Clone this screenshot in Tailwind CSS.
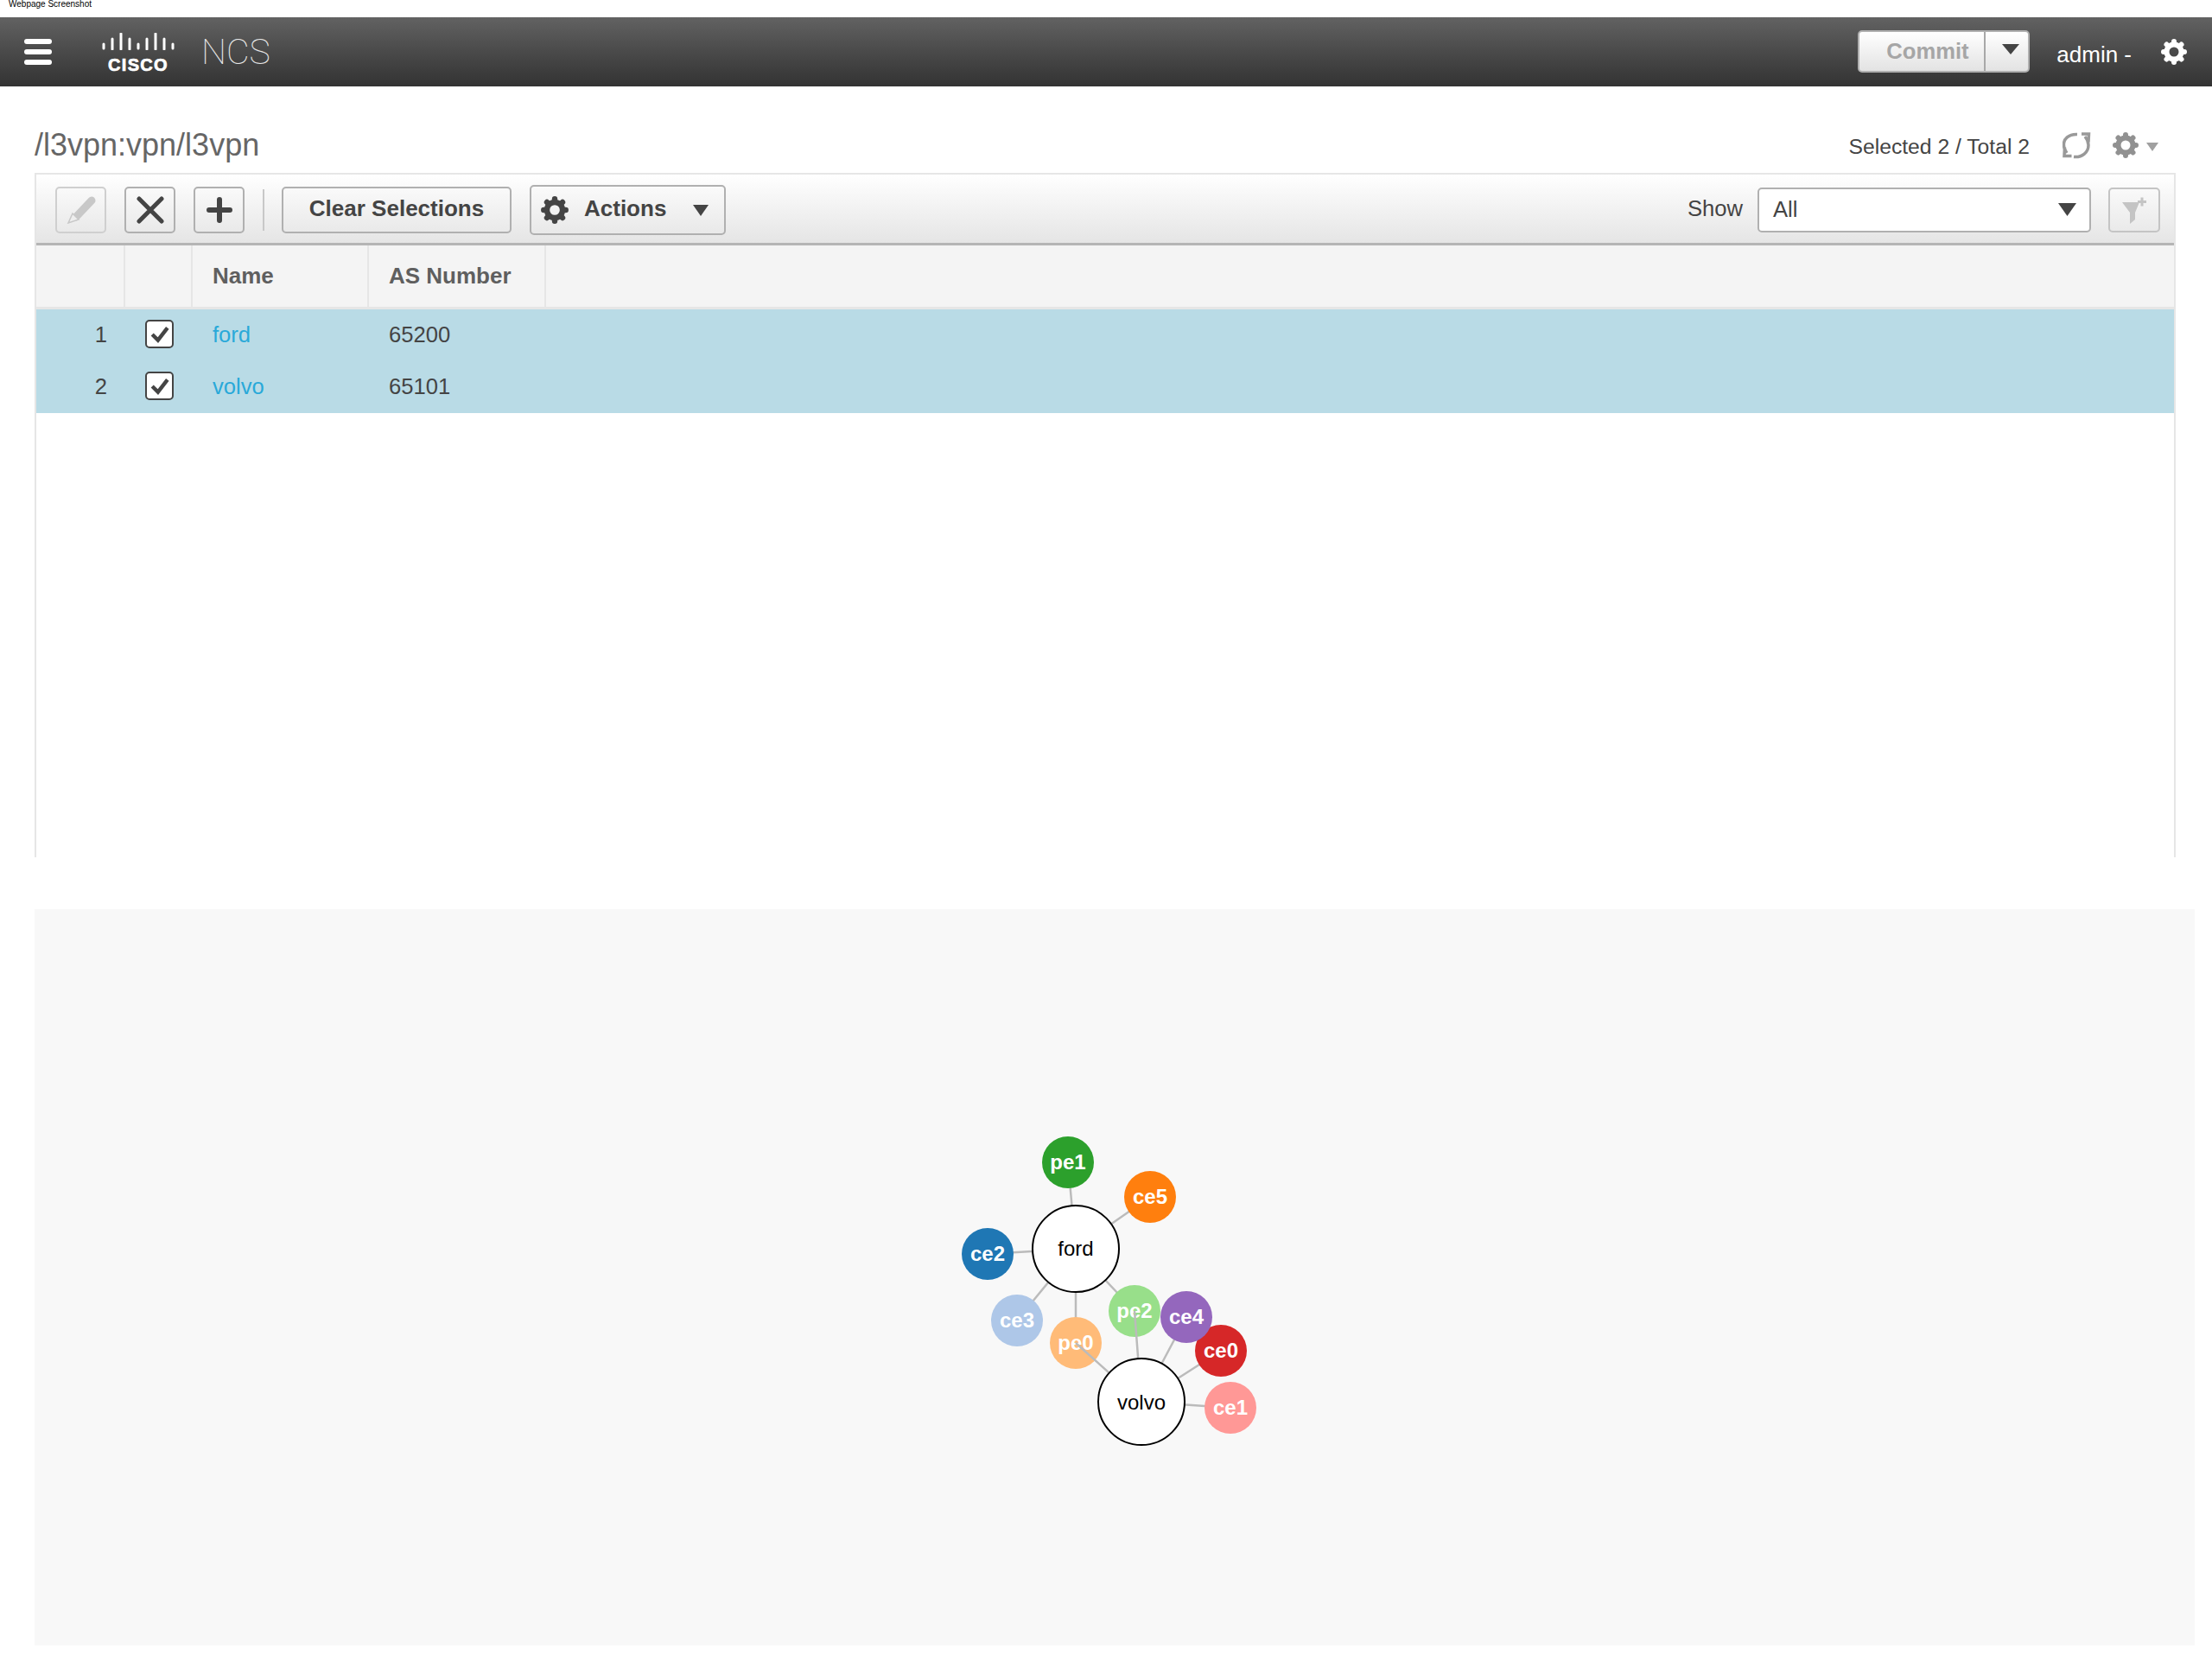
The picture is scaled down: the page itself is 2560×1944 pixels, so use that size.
<!DOCTYPE html>
<html><head><meta charset="utf-8"><title>NCS</title>
<script src="https://cdn.jsdelivr.net/npm/@tailwindcss/browser@4"></script></head>
<body class="bg-white font-['Liberation_Sans',Arial,sans-serif] text-[#444]">
<div class="w-[2560px] h-[1944px] overflow-hidden">
  <div class="h-[20px] pl-[10px] text-[10px] leading-[10px] text-black">Webpage Screenshot</div>
  <header class="h-[80px] flex items-center bg-gradient-to-b from-[#626262] to-[#333333]">
    <div class="ml-[28px] w-[32px] flex flex-col gap-[6px]">
      <div class="h-[6px] rounded-[3px] bg-white"></div><div class="h-[6px] rounded-[3px] bg-white"></div><div class="h-[6px] rounded-[3px] bg-white"></div>
    </div>
    <div class="ml-[58px] w-[84px] flex flex-col items-center mt-[2px]">
      <svg width="84" height="20" viewBox="0 0 84 20" fill="none" stroke="#fff" stroke-width="3" stroke-linecap="round" class="block"><path d="M2 13v5M12 7v12M22 1v18M32 7v12M42 13v5M52 7v12M62 1v18M72 7v12M82 13v5"/></svg>
      <span class="mt-[8px] text-[20px] leading-[18px] font-bold tracking-[1.3px] text-white [-webkit-text-stroke:0.7px_white]">CISCO</span>
    </div>
    <span class="ml-[31px] text-[41px] leading-[42px] font-thin font-['Roboto',sans-serif] text-[#e8e8e8]">NCS</span>
    <div class="ml-auto flex items-center h-[49px] w-[199px] rounded-[5px] border-2 border-[#b0b0b0] bg-gradient-to-b from-white to-[#e3e3e3] -mt-[2px]">
      <span class="w-[144px] pl-[31px] text-[25.6px] font-bold text-[#a6a6a6]">Commit</span>
      <div class="h-full border-l-2 border-[#a8a8a8] flex-1 flex justify-center pt-[14px] pl-[9px]">
        <svg width="20" height="12" viewBox="0 0 20 12"><path d="M0 0h20L10 12z" fill="#444"/></svg>
      </div>
    </div>
    <span class="ml-[31px] text-[26px] leading-[26px] text-white mt-[5px]">admin -</span>
    <svg class="ml-[33px] mr-[28px]" width="32" height="32" viewBox="0 0 32 32" fill="none" stroke="#fff"><circle cx="16" cy="16" r="8.5" stroke-width="6"/><path stroke-width="6" stroke-linecap="round" d="M16 4v3M16 25v3M4 16h3M25 16h3M7.5 7.5l2 2M22.5 22.5l2 2M24.5 7.5l-2 2M9.5 22.5l-2 2"/></svg>
  </header>
  <main class="pl-[40px]">
    <div class="h-[100px] w-[2478px] flex items-start">
      <h1 class="mt-[50px] text-[36px] leading-[36px] text-[#666]">/l3vpn:vpn/l3vpn</h1>
      <span class="ml-auto mt-[58px] text-[24.7px] leading-[24px] text-[#444]">Selected 2 / Total 2</span>
      <svg class="ml-[38px] mt-[53px]" width="33" height="32" viewBox="0 0 33 32" fill="none" stroke="#999" stroke-width="3.500"><path d="M17 2.500C7 2 1 8 1.500 15 1.500 18 3 21 5 24M13 28.500C23 29.500 30 23 30 15 30 11 28.500 8 26 5"/><path d="M2.500 17.500L2 27.500H10.500M22 2H30.500L30 11.500" stroke-width="3.500"/></svg>
      <svg class="ml-[24px] mt-[52px]" width="32" height="32" viewBox="0 0 32 32" fill="none" stroke="#919191"><circle cx="16" cy="16" r="8.5" stroke-width="6"/><path stroke-width="6" stroke-linecap="round" d="M16 4v3M16 25v3M4 16h3M25 16h3M7.5 7.500l2 2M22.500 22.500l2 2M24.500 7.500l-2 2M9.500 22.500l-2 2"/></svg>
      <svg class="ml-[8px] mt-[65px] mr-[20px]" width="14" height="10" viewBox="0 0 14 10"><path d="M0 0h14L7 10z" fill="#a0a0a0"/></svg>
    </div>
    <section class="w-[2478px] h-[792px] border-t-2 border-x-2 border-[#e6e6e6]">
      <div class="h-[82px] border-b-[3px] border-[#b5b5b5] bg-gradient-to-b from-white to-[#e5e5e5] flex items-center pt-[2px] pl-[22px] pr-[16px]">
        <button class="w-[59px] h-[54px] rounded-[5px] border-2 border-[#cfcfcf] flex items-center justify-center">
          <svg width="34" height="32" viewBox="0 0 34 32"><path d="M29 5L11 24" stroke="#c8c8c8" stroke-width="9" stroke-linecap="round"/><path d="M7 20l7 7-12 4z" fill="#eee" stroke="#c8c8c8" stroke-width="1.500"/></svg>
        </button>
        <button class="ml-[21px] w-[59px] h-[54px] rounded-[5px] border-2 border-[#b0b0b0] flex items-center justify-center">
          <svg width="32" height="32" viewBox="0 0 32 32" stroke="#444" stroke-width="5" stroke-linecap="round"><path d="M3 3l26 26M29 3L3 29"/></svg>
        </button>
        <button class="ml-[21px] w-[59px] h-[54px] rounded-[5px] border-2 border-[#b0b0b0] flex items-center justify-center">
          <svg width="30" height="30" viewBox="0 0 30 30" stroke="#444" stroke-width="6" stroke-linecap="round"><path d="M15 3v24M3 15h24"/></svg>
        </button>
        <div class="ml-[21px] w-[2px] h-[48px] bg-[#c8c8c8]"></div>
        <button class="ml-[20px] w-[266px] h-[54px] pb-[2px] rounded-[5px] border-2 border-[#b0b0b0] text-[26px] font-bold text-[#444]">Clear Selections</button>
        <button class="ml-[21px] w-[227px] h-[58px] rounded-[5px] border-2 border-[#b0b0b0] flex items-center text-[26px] font-bold text-[#444]">
          <svg class="ml-[10px]" width="34" height="34" viewBox="0 0 32 32" fill="none" stroke="#444"><circle cx="16" cy="16" r="8.5" stroke-width="6"/><path stroke-width="6" stroke-linecap="round" d="M16 4v3M16 25v3M4 16h3M25 16h3M7.5 7.500l2 2M22.500 22.500l2 2M24.500 7.500l-2 2M9.500 22.500l-2 2"/></svg>
          <span class="ml-[17px] -mt-[2px]">Actions</span>
          <svg class="ml-[31px] mt-[2px]" width="18" height="13" viewBox="0 0 18 13"><path d="M0 0h18L9 13z" fill="#444"/></svg>
        </button>
        <span class="ml-auto -mt-[2px] text-[25.6px] text-[#444]">Show</span>
        <div class="ml-[17px] w-[386px] h-[52px] rounded-[5px] border-2 border-[#b0b0b0] bg-white flex items-center pl-[16px] pr-[15px] text-[25.6px] text-[#444]">
          <span>All</span>
          <svg class="ml-auto" width="21" height="15" viewBox="0 0 21 15"><path d="M0 0h21L10.500 15z" fill="#444"/></svg>
        </div>
        <button class="ml-[20px] w-[60px] h-[52px] rounded-[5px] border-2 border-[#c4c4c4] flex items-center justify-center">
          <svg width="34" height="34" viewBox="0 0 34 34"><path d="M3 8H23L18 20V28L12 33V20Z" fill="#c4c4c4"/><path d="M26 2.500v10M21 7.500h10" stroke="#c4c4c4" stroke-width="3"/></svg>
        </button>
      </div>
      <div class="h-[74px] flex bg-[#f4f4f4] border-b-[3px] border-[#e6e6e6] text-[26px] font-bold text-[#5f5f5f]">
        <div class="w-[103px] border-r-2 border-[#e6e6e6]"></div>
        <div class="w-[78px] border-r-2 border-[#e6e6e6]"></div>
        <div class="w-[204px] border-r-2 border-[#e6e6e6] pl-[23px] flex items-center">Name</div>
        <div class="w-[205px] border-r-2 border-[#e6e6e6] pl-[23px] flex items-center">AS Number</div>
      </div>
      <div class="h-[60px] flex items-center bg-[#b9dbe6] pb-[3px] text-[25.6px] text-[#444]">
        <div class="w-[82px] text-right mt-[2px]">1</div>
        <div class="ml-[44px] w-[33px] h-[33px] rounded-[5px] border-2 border-[#444] bg-white flex items-center justify-center">
          <svg width="22" height="20" viewBox="0 0 20 18" fill="none" stroke="#444" stroke-width="4"><path d="M2 9l6 6L18 2"/></svg>
        </div>
        <a class="ml-[45px] w-[204px] text-[#29a9d9] mt-[2px]">ford</a>
        <span class="mt-[2px]">65200</span>
      </div>
      <div class="h-[60px] flex items-center bg-[#b9dbe6] pb-[3px] text-[25.6px] text-[#444]">
        <div class="w-[82px] text-right mt-[2px]">2</div>
        <div class="ml-[44px] w-[33px] h-[33px] rounded-[5px] border-2 border-[#444] bg-white flex items-center justify-center">
          <svg width="22" height="20" viewBox="0 0 20 18" fill="none" stroke="#444" stroke-width="4"><path d="M2 9l6 6L18 2"/></svg>
        </div>
        <a class="ml-[45px] w-[204px] text-[#29a9d9] mt-[2px]">volvo</a>
        <span class="mt-[2px]">65101</span>
      </div>
    </section>
    <section class="mt-[60px] w-[2500px] h-[852px] bg-[#f8f8f8]">
      <svg class="block" width="2500" height="852" viewBox="40 1052 2500 852" font-family="Liberation Sans, Arial, sans-serif" text-anchor="middle">
        <g stroke="#bbb" stroke-width="2.5">
          <path d="M1245 1445L1236 1345M1245 1445L1331 1385M1245 1445L1143 1451M1245 1445L1177 1528M1245 1445L1245 1554M1245 1445L1313 1517"/>
        </g>
        <g font-size="24" font-weight="700" fill="#fff">
          <circle cx="1236" cy="1345" r="30" fill="#2ca02c"/><text x="1236" y="1353">pe1</text>
          <circle cx="1331" cy="1385" r="30" fill="#ff7f0e"/><text x="1331" y="1393">ce5</text>
          <circle cx="1143" cy="1451" r="30" fill="#1f77b4"/><text x="1143" y="1459">ce2</text>
          <circle cx="1177" cy="1528" r="30" fill="#aec7e8"/><text x="1177" y="1536">ce3</text>
          <circle cx="1245" cy="1554" r="30" fill="#ffbb78"/><text x="1245" y="1562">pe0</text>
          <circle cx="1313" cy="1517" r="30" fill="#98df8a"/><text x="1313" y="1525">pe2</text>
        </g>
        <circle cx="1245" cy="1445" r="50" fill="#fff" stroke="#000" stroke-width="2"/>
        <text x="1245" y="1453" font-size="24" fill="#000">ford</text>
        <path d="M1321 1622L1245 1554M1321 1622L1313 1517M1321 1622L1373 1524M1321 1622L1413 1563M1321 1622L1424 1629" stroke="#bbb" stroke-width="2.500"/>
        <g font-size="24" font-weight="700" fill="#fff">
          <circle cx="1413" cy="1563" r="30" fill="#d62728"/><text x="1413" y="1571">ce0</text>
          <circle cx="1373" cy="1524" r="30" fill="#9467bd"/><text x="1373" y="1532">ce4</text>
          <circle cx="1424" cy="1629" r="30" fill="#ff9896"/><text x="1424" y="1637">ce1</text>
        </g>
        <circle cx="1321" cy="1622" r="50" fill="#fff" stroke="#000" stroke-width="2"/>
        <text x="1321" y="1631" font-size="24" fill="#000">volvo</text>
      </svg>
    </section>
  </main>
</div>
</body></html>
